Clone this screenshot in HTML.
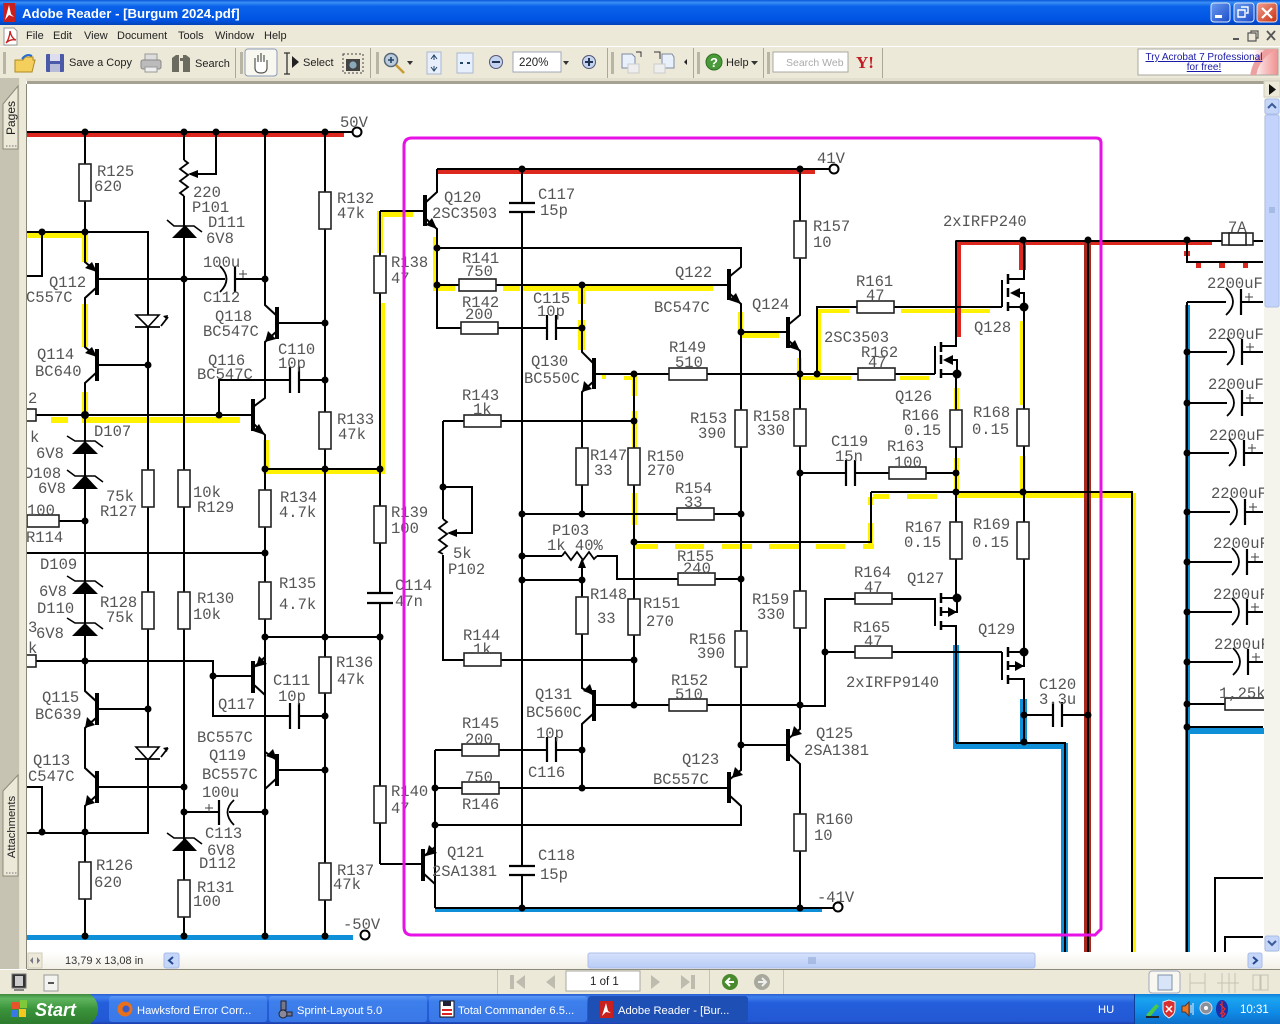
<!DOCTYPE html>
<html><head><meta charset="utf-8"><title>Adobe Reader - [Burgum 2024.pdf]</title>
<style>
html,body{margin:0;padding:0;background:#fff;width:1280px;height:1024px;overflow:hidden}
svg{display:block;position:absolute;left:0;top:0}
.t text{font-family:"Liberation Mono",monospace;font-size:15.5px;fill:#555}
.w{fill:none;stroke:#000;stroke-width:2}
.b{fill:none;stroke:#000;stroke-width:4}
.y{fill:#fff200;stroke:none}
.rd{fill:#dc281e;stroke:none}
.bl{fill:#0f8fd8;stroke:none}
.r rect{fill:#fff;stroke:#222;stroke-width:1.6}
.u text{font-family:"Liberation Sans",sans-serif;font-size:11px;fill:#222}
.tb text{font-family:"Liberation Sans",sans-serif;font-size:11.2px;fill:#fff}
</style></head><body>
<svg width="1280" height="1024" viewBox="0 0 1280 1024" xmlns="http://www.w3.org/2000/svg">
<defs>
<linearGradient id="tg" x1="0" y1="0" x2="0" y2="1"><stop offset="0" stop-color="#0a55d8"/><stop offset=".1" stop-color="#3a90f5"/><stop offset=".25" stop-color="#0a62ea"/><stop offset=".8" stop-color="#0054e3"/><stop offset="1" stop-color="#0342b8"/></linearGradient>
<linearGradient id="bg" x1="0" y1="0" x2="0" y2="1"><stop offset="0" stop-color="#2a5fd0"/><stop offset=".1" stop-color="#3f80ee"/><stop offset=".3" stop-color="#245edb"/><stop offset=".9" stop-color="#2358d4"/><stop offset="1" stop-color="#1b3fa8"/></linearGradient>
<linearGradient id="sg" x1="0" y1="0" x2="0" y2="1"><stop offset="0" stop-color="#3d8a3d"/><stop offset=".15" stop-color="#5fb55f"/><stop offset=".5" stop-color="#3b943b"/><stop offset="1" stop-color="#2d7a2d"/></linearGradient>
<linearGradient id="tr" x1="0" y1="0" x2="0" y2="1"><stop offset="0" stop-color="#0e7ed8"/><stop offset=".15" stop-color="#1ba4ef"/><stop offset=".6" stop-color="#0f8ce8"/><stop offset="1" stop-color="#0d6fc8"/></linearGradient>
<linearGradient id="tk" x1="0" y1="0" x2="0" y2="1"><stop offset="0" stop-color="#5a96f5"/><stop offset=".2" stop-color="#3d7fec"/><stop offset="1" stop-color="#3a78e6"/></linearGradient>
<linearGradient id="cl" x1="0" y1="0" x2="1" y2="1"><stop offset="0" stop-color="#f0a090"/><stop offset="1" stop-color="#c8300f"/></linearGradient>
<linearGradient id="wb" x1="0" y1="0" x2="1" y2="1"><stop offset="0" stop-color="#6a9cf0"/><stop offset="1" stop-color="#1c4cc8"/></linearGradient>
<linearGradient id="hs" x1="0" y1="0" x2="0" y2="1"><stop offset="0" stop-color="#fff"/><stop offset="1" stop-color="#f2f0e6"/></linearGradient>
<linearGradient id="ht" x1="0" y1="0" x2="0" y2="1"><stop offset="0" stop-color="#d6e2fc"/><stop offset="1" stop-color="#b8ccf6"/></linearGradient>
<linearGradient id="ad" x1="0" y1="0" x2="1" y2="0"><stop offset="0" stop-color="#fff"/><stop offset=".82" stop-color="#fff"/><stop offset=".9" stop-color="#f8c8c8"/><stop offset="1" stop-color="#f09090"/></linearGradient>
<clipPath id="adc"><rect x="1138" y="49" width="140" height="26"/></clipPath>
</defs>
<rect width="1280" height="1024" fill="#fff"/>

<!-- coloured highlight traces -->
<g class="y">
<rect x="27" y="232" width="58" height="6"/><rect x="82" y="232" width="6" height="30"/><rect x="82" y="304" width="6" height="43"/><rect x="82" y="392" width="6" height="23"/>
<rect x="51" y="417" width="17" height="6"/><rect x="82" y="417" width="158" height="6"/>
<rect x="263" y="440" width="6" height="34"/><rect x="265" y="469" width="119" height="5"/>
<rect x="377" y="211" width="6" height="42"/><rect x="377" y="212" width="36" height="5"/><rect x="380" y="303" width="5" height="171"/>
<rect x="433" y="237" width="5" height="53"/><rect x="433" y="286" width="22" height="5"/><rect x="503" y="286" width="17" height="5"/><rect x="523" y="286" width="190" height="5"/>
<rect x="578" y="290" width="7" height="14"/><rect x="578" y="320" width="7" height="30"/>
<rect x="738" y="312" width="5" height="20"/><rect x="741" y="333" width="38" height="5"/><rect x="797" y="358" width="5" height="19"/>
<rect x="602" y="375" width="4" height="4"/><rect x="624" y="376" width="8" height="4"/><rect x="632" y="376" width="5" height="20"/><rect x="632" y="411" width="5" height="39"/><rect x="632" y="493" width="5" height="32"/>
<rect x="634" y="544" width="24" height="5"/><rect x="675" y="544" width="29" height="5"/><rect x="722" y="544" width="30" height="5"/><rect x="769" y="544" width="30" height="5"/><rect x="816" y="544" width="29" height="5"/><rect x="863" y="544" width="11" height="5"/>
<rect x="868" y="523" width="5" height="22"/><rect x="868" y="497" width="5" height="8"/>
<rect x="873" y="494" width="16" height="5"/><rect x="907" y="494" width="30" height="5"/><rect x="956" y="493" width="177" height="5"/><rect x="1131" y="493" width="5" height="459"/>
<rect x="817" y="309" width="4" height="66"/><rect x="817" y="309" width="32" height="4"/><rect x="901" y="309" width="89" height="4"/>
<rect x="798" y="376" width="53" height="4"/><rect x="900" y="376" width="29" height="4"/>
<rect x="954" y="388" width="5" height="22"/><rect x="954" y="458" width="5" height="34"/><rect x="1020" y="321" width="4" height="84"/><rect x="1020" y="456" width="6" height="36"/>
</g>
<g class="rd">
<rect x="27" y="132" width="317" height="5"/><rect x="437" y="169" width="378" height="5"/>
<rect x="956" y="240" width="256" height="5"/><rect x="955" y="240" width="6" height="97"/><rect x="1019" y="240" width="7" height="30"/>
<rect x="1184" y="251" width="6" height="5"/><rect x="1196" y="263" width="5" height="5"/><rect x="1219" y="263" width="6" height="5"/><rect x="1243" y="263" width="5" height="5"/>
</g>
<rect x="1084" y="240" width="7" height="712" fill="#a8281e"/>
<g class="bl">
<rect x="27" y="935" width="326" height="5"/><rect x="435" y="907" width="387" height="5"/>
<rect x="953" y="645" width="6" height="103"/><rect x="953" y="743" width="115" height="6"/><rect x="1061" y="743" width="7" height="209"/><rect x="1020" y="699" width="7" height="44"/>
<rect x="1185" y="305" width="5" height="647"/><rect x="1187" y="728" width="77" height="6"/>
</g>

<!-- wires -->
<path class="w" d="M27 132H352M85 132V262L97 272M97 287L85 298V347L97 357M97 372L85 383V661V691L97 702M97 717L85 728V768L97 779M97 795L85 806V936
M27 232H148V315M148 327V448V470M148 507V592M148 629V747M148 760V833H27M42 232V276H27M42 832V787H27
M97 279H225M235 279H265M97 365H148M97 709H148M97 787H184
M184 132V160M184 196V936M216 132V174H190
M265 132V305L277 316M277 331L265 342V398L253 407M253 423L265 435V936
M325 132V936M277 323H325M219 415V380H290M299 380H325M36 415H253M265 469H380M265 553H27M59 521H85M36 661H213V716H290M299 716H325M213 676H253
M253 668L265 657V637H380M253 684L265 695V752L277 760M277 778L265 789M277 770H325M184 812H219M229 812H265
M380 211V469V593M380 603V864M380 211H425M380 864H423"/>
<path class="w" d="M437 169H829M437 169V192L425 203M425 218L437 229V328H461M522 169V203M522 212V866M522 875V908M437 248H741V267L729 277M437 285H729M729 293L741 304V770L729 780M729 795L741 806V825H435
M582 285V352L594 364M594 381L582 392V514M498 328H547M556 328H582M594 374H800M634 374V705M443 421H634M443 421V519M443 555V660H634M443 487H472V533H449
M522 514H741M522 556H562M597 556H617V579H741M522 580H582M582 566V688L594 695M594 713L582 724V788M594 705H800M435 750H547M556 750H582M435 788H729M435 750V908
M423 857L435 847M423 873L435 884M435 908H833
M741 332H788M788 325L800 315V169M788 340L800 351V729L788 739M788 753L800 764V908M741 745H788M800 473H846M855 473H956M800 706H825V599H935M825 652H1002
M817 374V307H1002M800 374H935"/>
<path class="w" d="M956 241H1263M956 241V346H941M941 374H957V360H953M1024 241V279H1008M1008 307H1024V293H1020M1024 307V652H1008M956 374V598H941M941 626H956V743M941 612H957V598M1008 679H1024V743M1008 666H1024V652
M871 492V542H634M871 492H1132V952M1024 715H1053M1062 715H1088M956 743H1065V952M1088 240V952
M1187 240V262H1263M1187 302V952M1187 302H1226M1241 302H1263M1187 352H1227M1242 352H1263M1187 403H1227M1242 403H1263M1187 453H1229M1244 453H1263M1187 512H1230M1245 512H1263M1187 562H1232M1247 562H1263M1187 612H1232M1247 612H1263M1187 662H1233M1248 662H1263M1187 704H1225M1187 727H1263
M1215 952V878H1263M1225 952V937H1263"/>
<!-- transistor bars -->
<path class="b" d="M97 263V295M97 349V381M97 693V725M97 771V803M253 399V431M253 661V693M277 307V339M277 754V786M425 195V226M423 849V881M594 358V389M594 690V721M729 269V300M729 772V803M788 317V348M788 729V761"/>
<!-- arrows -->
<path d="M97 272l-12-4 7-6zM97 357l-12-4 7-6zM265 435l-12-4 6-7zM437 229l-11-4 6-7zM741 304l-12-4 7-7zM800 351l-12-4 7-7zM85 728l2-11 8 8zM85 806l2-11 8 8zM265 342l3-11 8 8zM582 392l2-11 8 8zM256 667l3-11 8 8zM277 760l-11-4 7-7zM594 695l-11-4 7-7zM426 856l3-11 8 8zM732 778l3-11 8 8zM791 737l3-11 8 8z"/>
<path d="M188 174l10-4v8zM447 533l10-4v8zM582 558l-4 10h8zM943 360l10-5v10zM1010 293l10-5v10zM957 612l-9-5v10zM1024 666l-9-5v10z"/>
<!-- mosfets -->
<path class="w" d="M935 346V374M1002 280V307M935 598V626M1002 652V680"/>
<path fill="none" stroke="#000" stroke-width="2.5" d="M941 342V352M941 355V364M941 369V378M1008 274V284M1008 288V297M1008 302V311M941 593V603M941 607V616M941 621V630M1008 647V657M1008 661V670M1008 675V684"/>
<!-- pots -->
<path fill="none" stroke="#000" stroke-width="1.8" d="M184 160l4 3-8 6 8 6-8 6 8 6-8 6 4 3M443 519l4 3-8 6 8 6-8 6 8 6-8 6 4 2M562 556l3-4 6 8 6-8 6 8 6-8 5 7 3-3"/>
<!-- zeners -->
<path d="M172 238h25l-12-13zM72 454h26l-13-13zM72 489h26l-13-14zM72 594h26l-13-13zM72 636h26l-13-13zM172 851h25l-12-13z"/>
<path fill="none" stroke="#000" stroke-width="1.6" d="M167 220l7 6h20l8 6M67 436l8 5h20l8 6M67 470l8 6h20l8 6M67 576l8 5h20l8 6M67 618l8 5h20l8 6M167 833l7 5h20l8 6"/>
<!-- LEDs -->
<path fill="#fff" stroke="#000" stroke-width="1.6" d="M136 315h23l-11 12zM136 747h23l-11 13z"/>
<path fill="none" stroke="#000" stroke-width="1.8" d="M135 327h25M135 759h25M161 326l7-9M161 757l7-9"/>
<path d="M168 315l-5 1 4 4zM168 747l-5 1 4 4z"/>
<!-- caps -->
<path fill="none" stroke="#000" stroke-width="2.2" d="M290 367V393M299 367V393M290 703V729M299 703V729M235 266V292M219 800V825M509 203H535M509 212H535M509 866H535M509 875H535M367 593H393M367 603H393M547 315V340M556 315V340M547 737V762M556 737V762M846 460V486M855 460V486M1053 702V727M1062 702V727
M1241 289V315M1242 339V365M1242 390V416M1244 440V466M1245 499V525M1247 549V575M1247 599V625M1248 649V675"/>
<path fill="none" stroke="#000" stroke-width="1.8" d="M220 266Q233 279 220 292M234 800Q221 812 234 825M1226 288Q1240 302 1226 315M1227 338Q1241 352 1227 365M1227 389Q1241 403 1227 416M1229 439Q1243 453 1229 466M1230 498Q1244 512 1230 525M1232 548Q1246 562 1232 575M1232 598Q1246 612 1232 625M1233 648Q1247 662 1233 675"/>
<path fill="none" stroke="#444" stroke-width="1" d="M239 274h8M243 270v8M205 808h8M209 804v8M1245 297h8M1249 293v8M1246 347h8M1250 343v8M1246 398h8M1250 394v8M1248 448h8M1252 444v8M1249 507h8M1253 503v8M1251 557h8M1255 553v8M1251 607h8M1255 603v8M1252 657h8M1256 653v8"/>
<!-- resistors -->
<g class="r">
<rect x="79" y="164" width="12" height="37"/><rect x="319" y="192" width="12" height="37"/><rect x="319" y="412" width="12" height="37"/><rect x="374" y="256" width="12" height="37"/><rect x="142" y="470" width="12" height="37"/><rect x="178" y="470" width="12" height="37"/><rect x="259" y="490" width="12" height="37"/><rect x="374" y="506" width="12" height="37"/><rect x="259" y="582" width="12" height="37"/><rect x="142" y="592" width="12" height="37"/><rect x="178" y="592" width="12" height="37"/><rect x="319" y="657" width="12" height="36"/><rect x="374" y="786" width="12" height="37"/><rect x="79" y="862" width="12" height="37"/><rect x="319" y="863" width="12" height="37"/><rect x="178" y="880" width="12" height="37"/>
<rect x="27" y="515" width="32" height="12"/><rect x="24" y="409" width="12" height="12"/><rect x="24" y="655" width="12" height="12"/>
<rect x="459" y="279" width="37" height="12"/><rect x="461" y="322" width="37" height="12"/><rect x="669" y="368" width="38" height="12"/><rect x="464" y="415" width="37" height="12"/><rect x="677" y="508" width="37" height="12"/><rect x="678" y="573" width="37" height="12"/><rect x="464" y="653" width="37" height="13"/><rect x="669" y="699" width="38" height="12"/><rect x="462" y="744" width="37" height="12"/><rect x="462" y="782" width="37" height="12"/>
<rect x="794" y="221" width="12" height="37"/><rect x="576" y="448" width="12" height="37"/><rect x="628" y="448" width="12" height="37"/><rect x="735" y="410" width="12" height="37"/><rect x="794" y="409" width="12" height="37"/><rect x="576" y="597" width="12" height="37"/><rect x="628" y="599" width="12" height="36"/><rect x="794" y="591" width="12" height="37"/><rect x="735" y="631" width="12" height="36"/><rect x="794" y="814" width="12" height="37"/>
<rect x="857" y="301" width="37" height="12"/><rect x="858" y="368" width="37" height="12"/><rect x="889" y="467" width="37" height="12"/><rect x="855" y="593" width="37" height="11"/><rect x="855" y="646" width="37" height="12"/>
<rect x="950" y="410" width="12" height="37"/><rect x="1017" y="409" width="12" height="37"/><rect x="950" y="522" width="12" height="37"/><rect x="1017" y="522" width="12" height="37"/>
<rect x="1225" y="698" width="40" height="12"/><rect x="1222" y="233" width="31" height="12"/><rect x="1229" y="233" width="17" height="12"/>
</g>
<!-- dots -->
<g fill="#000">
<circle cx="85" cy="132" r="3.5"/><circle cx="184" cy="132" r="3.5"/><circle cx="216" cy="132" r="3.5"/><circle cx="265" cy="132" r="3.5"/><circle cx="325" cy="132" r="3.5"/><circle cx="42" cy="232" r="3.5"/><circle cx="85" cy="232" r="3.5"/><circle cx="184" cy="279" r="3.5"/><circle cx="265" cy="279" r="3.5"/><circle cx="325" cy="323" r="3.5"/><circle cx="148" cy="365" r="3.5"/><circle cx="325" cy="380" r="3.5"/><circle cx="85" cy="415" r="4"/><circle cx="219" cy="415" r="3.5"/><circle cx="265" cy="469" r="3.5"/><circle cx="325" cy="469" r="3.5"/><circle cx="380" cy="469" r="3.5"/><circle cx="85" cy="521" r="3.5"/><circle cx="265" cy="553" r="3.5"/><circle cx="265" cy="637" r="3.5"/><circle cx="325" cy="637" r="3.5"/><circle cx="380" cy="637" r="3.5"/><circle cx="85" cy="661" r="3.5"/><circle cx="213" cy="676" r="3.5"/><circle cx="148" cy="709" r="3.5"/><circle cx="325" cy="716" r="3.5"/><circle cx="325" cy="770" r="3.5"/><circle cx="184" cy="787" r="3.5"/><circle cx="184" cy="812" r="3.5"/><circle cx="265" cy="812" r="3.5"/><circle cx="42" cy="832" r="3.5"/><circle cx="85" cy="832" r="3.5"/><circle cx="85" cy="936" r="3.5"/><circle cx="184" cy="936" r="3.5"/><circle cx="265" cy="936" r="3.5"/><circle cx="325" cy="936" r="3.5"/>
<circle cx="522" cy="169" r="3.5"/><circle cx="800" cy="169" r="3.5"/><circle cx="437" cy="248" r="3.5"/><circle cx="437" cy="285" r="3.5"/><circle cx="582" cy="285" r="3.5"/><circle cx="582" cy="328" r="3.5"/><circle cx="741" cy="332" r="3.5"/><circle cx="634" cy="374" r="3.5"/><circle cx="800" cy="374" r="3.5"/><circle cx="817" cy="374" r="3.5"/><circle cx="634" cy="421" r="3.5"/><circle cx="800" cy="473" r="3.5"/><circle cx="443" cy="487" r="3.5"/><circle cx="522" cy="514" r="3.5"/><circle cx="582" cy="514" r="3.5"/><circle cx="741" cy="514" r="3.5"/><circle cx="634" cy="542" r="3.5"/><circle cx="522" cy="556" r="3.5"/><circle cx="522" cy="580" r="3.5"/><circle cx="582" cy="580" r="3.5"/><circle cx="741" cy="579" r="3.5"/><circle cx="634" cy="660" r="3.5"/><circle cx="634" cy="705" r="3.5"/><circle cx="800" cy="705" r="3.5"/><circle cx="825" cy="652" r="3.5"/><circle cx="741" cy="745" r="3.5"/><circle cx="582" cy="750" r="3.5"/><circle cx="435" cy="788" r="3.5"/><circle cx="582" cy="788" r="3.5"/><circle cx="435" cy="825" r="3.5"/><circle cx="522" cy="908" r="3.5"/><circle cx="800" cy="908" r="3.5"/>
<circle cx="1023" cy="240" r="3.5"/><circle cx="1088" cy="240" r="3.5"/><circle cx="1187" cy="240" r="3.5"/><circle cx="1024" cy="307" r="4.5"/><circle cx="957" cy="374" r="4.5"/><circle cx="956" cy="473" r="3.5"/><circle cx="956" cy="492" r="3.5"/><circle cx="1023" cy="492" r="3.5"/><circle cx="957" cy="598" r="4.5"/><circle cx="1024" cy="652" r="4.5"/><circle cx="1024" cy="715" r="3.5"/><circle cx="1088" cy="715" r="3.5"/><circle cx="1024" cy="742" r="3.5"/>
<circle cx="1187" cy="352" r="3.5"/><circle cx="1187" cy="403" r="3.5"/><circle cx="1187" cy="453" r="3.5"/><circle cx="1187" cy="512" r="3.5"/><circle cx="1187" cy="562" r="3.5"/><circle cx="1187" cy="612" r="3.5"/><circle cx="1187" cy="662" r="3.5"/><circle cx="1187" cy="704" r="3.5"/><circle cx="1187" cy="727" r="3.5"/>
</g>
<g fill="#fff" stroke="#000" stroke-width="2"><circle cx="357" cy="132" r="4.5"/><circle cx="365" cy="935" r="4.5"/><circle cx="834" cy="169" r="4.5"/><circle cx="838" cy="907" r="4.5"/></g>

<!-- labels -->
<g class="t">
<text x="340" y="127">50V</text><text x="97" y="176">R125</text><text x="94" y="191">620</text><text x="193" y="197">220</text><text x="192" y="212">P101</text><text x="208" y="227">D111</text><text x="206" y="243">6V8</text><text x="203" y="267">100u</text><text x="203" y="302">C112</text><text x="26" y="302">C557C</text><text x="49" y="287">Q112</text><text x="215" y="321">Q118</text><text x="203" y="336">BC547C</text><text x="337" y="203">R132</text><text x="337" y="218">47k</text><text x="37" y="359">Q114</text><text x="35" y="376">BC640</text><text x="278" y="354">C110</text><text x="278" y="368">10p</text><text x="208" y="365">Q116</text><text x="197" y="379">BC547C</text><text x="337" y="424">R133</text><text x="338" y="439">47k</text><text x="28" y="403">2</text><text x="30" y="442">k</text><text x="94" y="436">D107</text><text x="36" y="458">6V8</text><text x="24" y="478">D108</text><text x="38" y="493">6V8</text><text x="106" y="501">75k</text><text x="100" y="516">R127</text><text x="193" y="497">10k</text><text x="197" y="512">R129</text><text x="280" y="502">R134</text><text x="279" y="517">4.7k</text><text x="27" y="515">100</text><text x="26" y="542">R114</text>
<text x="40" y="569">D109</text><text x="39" y="596">6V8</text><text x="37" y="613">D110</text><text x="28" y="632">3</text><text x="36" y="638">6V8</text><text x="100" y="607">R128</text><text x="106" y="622">75k</text><text x="197" y="603">R130</text><text x="193" y="619">10k</text><text x="279" y="588">R135</text><text x="279" y="609">4.7k</text><text x="28" y="653">k</text><text x="336" y="667">R136</text><text x="337" y="684">47k</text><text x="273" y="685">C111</text><text x="278" y="701">10p</text><text x="218" y="709">Q117</text><text x="42" y="702">Q115</text><text x="35" y="719">BC639</text><text x="197" y="742">BC557C</text><text x="209" y="760">Q119</text><text x="202" y="779">BC557C</text><text x="202" y="797">100u</text><text x="205" y="838">C113</text><text x="207" y="855">6V8</text><text x="199" y="868">D112</text><text x="197" y="892">R131</text><text x="193" y="906">100</text><text x="33" y="765">Q113</text><text x="28" y="781">C547C</text><text x="96" y="870">R126</text><text x="94" y="887">620</text><text x="337" y="875">R137</text><text x="333" y="889">47k</text><text x="343" y="929">-50V</text>
<text x="391" y="267">R138</text><text x="391" y="283">47</text><text x="391" y="517">R139</text><text x="391" y="533">100</text><text x="395" y="590">C114</text><text x="395" y="606">47n</text><text x="391" y="796">R140</text><text x="391" y="813">47</text>
<text x="817" y="163">41V</text><text x="444" y="202">Q120</text><text x="432" y="218">2SC3503</text><text x="538" y="199">C117</text><text x="540" y="215">15p</text><text x="813" y="231">R157</text><text x="813" y="247">10</text><text x="462" y="263">R141</text><text x="465" y="276">750</text><text x="675" y="277">Q122</text><text x="654" y="312">BC547C</text><text x="752" y="309">Q124</text><text x="462" y="307">R142</text><text x="465" y="319">200</text><text x="533" y="303">C115</text><text x="537" y="316">10p</text><text x="531" y="366">Q130</text><text x="524" y="383">BC550C</text><text x="669" y="352">R149</text><text x="675" y="367">510</text><text x="462" y="400">R143</text><text x="473" y="414">1k</text><text x="690" y="423">R153</text><text x="698" y="438">390</text><text x="753" y="421">R158</text><text x="757" y="435">330</text><text x="590" y="460">R147</text><text x="594" y="475">33</text><text x="647" y="461">R150</text><text x="647" y="475">270</text><text x="675" y="493">R154</text><text x="684" y="507">33</text><text x="552" y="535">P103</text><text x="547" y="550">1k 40%</text><text x="453" y="558">5k</text><text x="448" y="574">P102</text><text x="677" y="561">R155</text><text x="683" y="573">240</text><text x="590" y="599">R148</text><text x="597" y="623">33</text><text x="643" y="608">R151</text><text x="646" y="626">270</text><text x="752" y="604">R159</text><text x="757" y="619">330</text><text x="689" y="644">R156</text><text x="697" y="658">390</text><text x="463" y="640">R144</text><text x="473" y="654">1k</text><text x="535" y="699">Q131</text><text x="526" y="717">BC560C</text><text x="671" y="685">R152</text><text x="675" y="699">510</text><text x="462" y="728">R145</text><text x="465" y="744">200</text><text x="536" y="738">10p</text><text x="528" y="777">C116</text><text x="465" y="782">750</text><text x="462" y="809">R146</text><text x="682" y="764">Q123</text><text x="653" y="784">BC557C</text><text x="816" y="738">Q125</text><text x="804" y="755">2SA1381</text><text x="816" y="824">R160</text><text x="814" y="840">10</text><text x="447" y="857">Q121</text><text x="432" y="876">2SA1381</text><text x="538" y="860">C118</text><text x="540" y="879">15p</text><text x="817" y="902">-41V</text>
<text x="943" y="226">2xIRFP240</text><text x="856" y="286">R161</text><text x="866" y="300">47</text><text x="974" y="332">Q128</text><text x="824" y="342">2SC3503</text><text x="861" y="357">R162</text><text x="868" y="367">47</text><text x="895" y="401">Q126</text><text x="902" y="420">R166</text><text x="904" y="435">0.15</text><text x="973" y="417">R168</text><text x="972" y="434">0.15</text><text x="831" y="446">C119</text><text x="835" y="461">15n</text><text x="887" y="451">R163</text><text x="894" y="467">100</text><text x="905" y="532">R167</text><text x="904" y="547">0.15</text><text x="973" y="529">R169</text><text x="972" y="547">0.15</text><text x="854" y="577">R164</text><text x="907" y="583">Q127</text><text x="864" y="592">47</text><text x="853" y="632">R165</text><text x="864" y="646">47</text><text x="846" y="687">2xIRFP9140</text><text x="978" y="634">Q129</text><text x="1039" y="689">C120</text><text x="1039" y="704">3.3u</text><text x="1228" y="232">7A</text>
<text x="1207" y="288">2200uF</text><text x="1208" y="339">2200uF</text><text x="1208" y="389">2200uF</text><text x="1209" y="440">2200uF</text><text x="1211" y="498">2200uF</text><text x="1213" y="548">2200uF</text><text x="1213" y="599">2200uF</text><text x="1214" y="649">2200uF</text><text x="1219" y="698">1,25k</text>
</g>
<!-- magenta frame -->
<path fill="none" stroke="#e612e6" stroke-width="3" d="M412 138H1096Q1101 138 1101 143V929L1095 935H412Q404 935 404 927V146Q404 138 412 138Z"/>

<!-- window chrome -->
<rect x="0" y="0" width="1280" height="25" fill="url(#tg)"/>
<path d="M3 3h12v19H3z" fill="#c81f1f"/><path d="M5 20l4-15 2 9 3 3-5-2z" fill="#fff"/>
<text x="22" y="18" font-family="Liberation Sans,sans-serif" font-size="13.2" font-weight="bold" fill="#fff">Adobe Reader - [Burgum 2024.pdf]</text>
<rect x="1211" y="3" width="19" height="19" rx="3" fill="url(#wb)" stroke="#dfe8fb"/><rect x="1215" y="15" width="7" height="3" fill="#fff"/>
<rect x="1234" y="3" width="20" height="19" rx="3" fill="url(#wb)" stroke="#dfe8fb"/><path d="M1241 7h7v6h-2M1238 10h7v7h-7z" fill="none" stroke="#fff" stroke-width="1.4"/>
<rect x="1257" y="3" width="20" height="19" rx="3" fill="url(#cl)" stroke="#f4dcd6"/><path d="M1262 8l10 10M1272 8l-10 10" stroke="#fff" stroke-width="2.2"/>
<rect x="0" y="25" width="1280" height="22" fill="#ece9d8"/>
<path d="M4 28h10l3 3v14H4z" fill="#fff" stroke="#999"/><path d="M6 43c2-2 4-8 4-12 1 5 3 8 6 9-4-1-7 0-10 3z" fill="none" stroke="#c81f1f" stroke-width="1.3"/>
<g class="u"><text x="26" y="39">File</text><text x="53" y="39">Edit</text><text x="84" y="39">View</text><text x="117" y="39">Document</text><text x="178" y="39">Tools</text><text x="215" y="39">Window</text><text x="264" y="39">Help</text></g>
<g fill="#555"><rect x="1233" y="38" width="6" height="2"/></g>
<path d="M1248 33h8v8h-8zM1251 33v-2h7v7h-2" fill="none" stroke="#555" stroke-width="1.2"/>
<path d="M1267 31l8 9M1275 31l-8 9" stroke="#555" stroke-width="1.8"/>
<rect x="0" y="46" width="1280" height="32" fill="#ece9d8"/><rect x="0" y="46" width="1280" height="1" fill="#fff"/>
<g fill="#b8b5a4"><rect x="3" y="52" width="3" height="22"/><rect x="240" y="52" width="3" height="22"/><rect x="376" y="52" width="3" height="22"/><rect x="611" y="52" width="3" height="22"/><rect x="697" y="52" width="3" height="22"/><rect x="767" y="52" width="3" height="22"/></g>
<g fill="#aca899"><rect x="235" y="48" width="1" height="30"/><rect x="370" y="48" width="1" height="30"/><rect x="607" y="48" width="1" height="30"/><rect x="693" y="48" width="1" height="30"/><rect x="763" y="48" width="1" height="30"/><rect x="882" y="48" width="1" height="30"/></g>
<path d="M15 60h8l2-3h8v3h2l-3 12H15z" fill="#f5cf5c" stroke="#b08a20"/><path d="M22 59c3-4 6-5 10-3" fill="none" stroke="#2a6fd0" stroke-width="2"/>
<rect x="46" y="54" width="18" height="18" rx="1" fill="#4a5aa8"/><rect x="50" y="54" width="10" height="7" fill="#dde"/><rect x="50" y="64" width="10" height="8" fill="#b8bcd8"/>
<g class="u"><text x="69" y="66">Save a Copy</text><text x="195" y="67">Search</text><text x="303" y="66">Select</text><text x="726" y="66">Help</text></g>
<rect x="145" y="54" width="12" height="6" fill="#ddd" stroke="#999"/><rect x="141" y="60" width="20" height="9" rx="2" fill="#bbb" stroke="#888"/><rect x="145" y="67" width="12" height="5" fill="#eee" stroke="#999"/>
<path d="M172 58l4-3h3v17h-7zM180 58h3v-3h3l4 3v14h-7v-11h-3z" fill="#6b6b60"/>
<rect x="245" y="49" width="32" height="27" rx="3" fill="#f8f7f0" stroke="#8a9ab8"/>
<path d="M255 60v8c0 3 2 5 6 5s6-2 6-5v-8m-3 2v-7m-3 7v-9m-3 9v-7m-3 7v-4" fill="#fff" stroke="#555" stroke-width="1.2"/>
<path d="M284 53h6M284 74h6M287 53v21" stroke="#333" stroke-width="1.3"/><path d="M292 56l7 6-7 6z" fill="#222"/>
<rect x="343" y="54" width="20" height="19" fill="none" stroke="#444" stroke-dasharray="2 2"/><rect x="346" y="59" width="14" height="12" fill="#444"/><circle cx="353" cy="65" r="3.6" fill="#8ab"/>
<circle cx="391" cy="60" r="6.5" fill="#bcd" stroke="#567" stroke-width="1.5"/><path d="M388 60h6M391 57v6" stroke="#246" stroke-width="1.6"/><path d="M396 65l8 8" stroke="#c89a30" stroke-width="2.5"/>
<path d="M407 61h6l-3 4z" fill="#333"/>
<rect x="427" y="52" width="14" height="22" fill="#e6effb" stroke="#aab8d0"/><path d="M434 55v5M431 59l3-4 3 4M434 66v5M431 67l3 4 3-4" stroke="#246" fill="none"/>
<rect x="457" y="53" width="16" height="20" fill="#e6effb" stroke="#aab8d0"/><path d="M460 63h3M470 63h-3" stroke="#246" stroke-width="2"/>
<circle cx="496" cy="62" r="6.5" fill="#c4d4ee" stroke="#557"/><rect x="492" y="61" width="8" height="2" fill="#235"/>
<rect x="513" y="52" width="48" height="20" fill="#fff" stroke="#a0a8b8"/><text x="519" y="66" font-family="Liberation Sans,sans-serif" font-size="11.5" fill="#222">220%</text>
<path d="M563 61h6l-3 4z" fill="#333"/>
<circle cx="589" cy="62" r="6.5" fill="#c4d4ee" stroke="#557"/><path d="M585 62h8M589 58v8" stroke="#235" stroke-width="2"/>
<path d="M622 54h10l3 3v11h-13z" fill="#e8f0fc" stroke="#7f8aa0"/><path d="M628 64h11v9h-11z" fill="#eee" stroke="#ccc"/><path d="M636 52h5v5" fill="none" stroke="#333"/>
<path d="M662 54h10l2 3v11h-12z" fill="#e8f0fc" stroke="#7f8aa0"/><path d="M654 64h11v9h-11z" fill="#eee" stroke="#ccc"/><path d="M654 52h6v7" fill="none" stroke="#333"/>
<path d="M687 59v6l-3-3z" fill="#222"/>
<circle cx="714" cy="62" r="8" fill="#4a9a3a" stroke="#2d7020"/><text x="710" y="67" font-family="Liberation Sans,sans-serif" font-size="13" font-weight="bold" fill="#fff">?</text>
<path d="M751 61h7l-3.500 4z" fill="#333"/>
<rect x="773" y="52" width="75" height="20" fill="#fff" stroke="#a8a8a0"/><text x="786" y="66" font-family="Liberation Sans,sans-serif" font-size="10.5" fill="#aaa">Search Web</text>
<text x="856" y="68" font-family="Liberation Serif,serif" font-size="17" font-weight="bold" fill="#c21b22">Y!</text>
<rect x="1138" y="49" width="140" height="26" fill="url(#ad)" stroke="#a8a8a0"/><circle cx="1288" cy="80" r="35" fill="none" stroke="#eea0a0" stroke-width="6" clip-path="url(#adc)"/>
<g font-family="Liberation Sans,sans-serif" font-size="10" fill="#1a1aa8" text-decoration="underline" text-anchor="middle"><text x="1204" y="60">Try Acrobat 7 Professional</text><text x="1204" y="70">for free!</text></g>
<rect x="0" y="78" width="1280" height="3" fill="#e2dfce"/><rect x="27" y="81" width="1237" height="3" fill="#a5a292"/>
<!-- left panel -->
<rect x="0" y="78" width="20" height="891" fill="#c6c3b2"/><rect x="20" y="78" width="6" height="891" fill="#ece9d8"/><rect x="26" y="84" width="1" height="885" fill="#8a8878"/>
<rect x="19" y="78" width="1" height="891" fill="#e6e3d2"/>
<path d="M3 104L18 86V149H3Z" fill="#ece9d8" stroke="#8c8a7a"/>
<path d="M3 791L18 775V876H3Z" fill="#ece9d8" stroke="#8c8a7a"/>
<path d="M6 146h11M6 873h11" stroke="#999" stroke-width="1.5" stroke-dasharray="1.5 1.5"/>
<g font-family="Liberation Sans,sans-serif" fill="#222" text-anchor="middle"><text font-size="12" transform="translate(15,118) rotate(-90)">Pages</text><text font-size="11.2" transform="translate(15,827) rotate(-90)">Attachments</text></g>
<!-- right scrollbar -->
<rect x="1264" y="84" width="16" height="868" fill="#f5f4ec"/>
<rect x="1264" y="81" width="16" height="16" fill="#ece9d8" stroke="#d0cdbc"/><path d="M1269 84l7 5.500-7 5.500z" fill="#111"/>
<rect x="1265" y="99" width="14" height="15" rx="2" fill="#c5d6f8" stroke="#a8bce8"/><path d="M1268 108l4-4 4 4" fill="none" stroke="#3a5a98" stroke-width="2"/>
<rect x="1265" y="115" width="14" height="192" rx="2" fill="#c3d3fb" stroke="#aebfe8"/><path d="M1269 208h6M1269 210h6M1269 212h6" stroke="#8aa0d0"/>
<rect x="1265" y="936" width="14" height="15" rx="2" fill="#c5d6f8" stroke="#a8bce8"/><path d="M1268 941l4 4 4-4" fill="none" stroke="#3a5a98" stroke-width="2"/>
<!-- horizontal scrollbar -->
<rect x="27" y="952" width="1253" height="17" fill="url(#hs)"/>
<rect x="28" y="953" width="14" height="15" fill="#ece9d8" stroke="#d0cdbc"/><path d="M33 957v7l-3-3.500zM37 957v7l3-3.500z" fill="#778"/>
<text x="65" y="964" font-family="Liberation Sans,sans-serif" font-size="11" fill="#333">13,79 x 13,08 in</text>
<rect x="164" y="953" width="15" height="15" rx="2" fill="#c5d6f8" stroke="#a8bce8"/><path d="M173 957l-4 3.500 4 3.500" fill="none" stroke="#234a90" stroke-width="2"/>
<rect x="588" y="953" width="447" height="15" rx="2" fill="url(#ht)" stroke="#aebfe8"/><path d="M809 957v7M811 957v7M813 957v7M815 957v7" stroke="#8aa0d0"/>
<rect x="1248" y="953" width="14" height="15" rx="2" fill="#c5d6f8" stroke="#a8bce8"/><path d="M1253 957l4 3.500-4 3.500" fill="none" stroke="#234a90" stroke-width="2"/>
<rect x="27" y="969" width="1253" height="1" fill="#8c8a7a"/>
<!-- status bar -->
<rect x="0" y="970" width="1280" height="24" fill="#ece9d8"/>
<rect x="12" y="974" width="14" height="14" fill="#333" stroke="#777"/><rect x="15" y="976" width="8" height="10" fill="#ccc"/><rect x="14" y="989" width="10" height="2" fill="#888"/>
<rect x="44" y="975" width="14" height="16" fill="#f3f3ef" stroke="#999"/><rect x="48" y="982" width="6" height="2" fill="#555"/>
<rect x="497" y="970" width="1" height="24" fill="#c6c3b2"/>
<path d="M510 975h4v14h-4zM525 975v14l-9-7z" fill="#bdbcae"/><path d="M555 975v14l-9-7z" fill="#bdbcae"/>
<rect x="566" y="971" width="74" height="20" fill="#fff" stroke="#a8a8a0"/><text x="590" y="985" font-family="Liberation Sans,sans-serif" font-size="11.5" fill="#222">1 of 1</text>
<path d="M651 975v14l9-7zM681 975v14l9-7zM691 975h4v14h-4z" fill="#bdbcae"/>
<rect x="709" y="970" width="1" height="24" fill="#c6c3b2"/>
<circle cx="730" cy="982" r="8" fill="#4a8a2e"/><path d="M734 982h-7M730 978l-4 4 4 4" fill="none" stroke="#fff" stroke-width="2"/>
<circle cx="762" cy="982" r="8" fill="#a8a89c"/><path d="M758 982h7M762 978l4 4-4 4" fill="none" stroke="#eee" stroke-width="2"/>
<rect x="783" y="970" width="1" height="24" fill="#c6c3b2"/>
<rect x="1149" y="971" width="31" height="22" rx="3" fill="#f8f7f0" stroke="#a0a8c0"/><rect x="1158" y="975" width="14" height="15" fill="#d8e4f8" stroke="#8090a8"/>
<path d="M1190 973v20M1205 973v20M1190 983h15M1222 973v20M1235 973v20M1217 983h22M1229 973v20M1253 975h7v15h-7zM1261 975h7v15h-7z" fill="none" stroke="#c4c2b4"/>
<!-- taskbar -->
<rect x="0" y="994" width="1280" height="30" fill="url(#bg)"/>
<path d="M0 994H90Q98 1000 98 1009Q98 1018 90 1024H0Z" fill="url(#sg)"/>
<g><rect x="12" y="1002" width="7" height="7" fill="#e8542a"/><rect x="20" y="1000" width="7" height="8" fill="#7ec83c"/><rect x="11" y="1010" width="7" height="7" fill="#3a78e8"/><rect x="19" y="1009" width="7" height="8" fill="#f4c81c"/></g>
<text x="35" y="1016" font-family="Liberation Sans,sans-serif" font-size="18" font-weight="bold" font-style="italic" fill="#fff">Start</text>
<rect x="109" y="996" width="158" height="26" rx="3" fill="url(#tk)"/><rect x="269" y="996" width="158" height="26" rx="3" fill="url(#tk)"/><rect x="429" y="996" width="158" height="26" rx="3" fill="url(#tk)"/><rect x="588" y="996" width="160" height="26" rx="3" fill="#1e4fb4"/>
<circle cx="125" cy="1009" r="7.5" fill="#e8701c"/><circle cx="126" cy="1009" r="3.5" fill="#3a5cc8"/>
<path d="M281 1001h5v9h-5zM286 1012h6v4h-6z" fill="#778" stroke="#223"/><circle cx="283" cy="1014" r="4" fill="#889" stroke="#223"/>
<rect x="440" y="1001" width="14" height="16" fill="#fff" stroke="#111"/><rect x="443" y="1001" width="8" height="5" fill="#223"/><rect x="442" y="1009" width="10" height="2" fill="#d22"/><rect x="442" y="1013" width="10" height="2" fill="#d22"/>
<rect x="600" y="1001" width="13" height="17" fill="#c81f1f"/><path d="M602 1016l4-13 2 8 3 2-5-1z" fill="#fff"/>
<g class="tb"><text x="137" y="1014">Hawksford Error Corr...</text><text x="297" y="1014">Sprint-Layout 5.0</text><text x="458" y="1014">Total Commander 6.5...</text><text x="618" y="1014">Adobe Reader - [Bur...</text><text x="1098" y="1013">HU</text></g>
<rect x="1134" y="994" width="146" height="30" fill="url(#tr)"/><rect x="1134" y="994" width="1" height="30" fill="#0b3f9a"/>
<path d="M1146 1015l10-11 3 2-9 11z" fill="#4ac84a"/><path d="M1146 1017h13" stroke="#222" stroke-width="2"/>
<path d="M1163 1002l6-2 6 2v7c0 5-3 7-6 9-3-2-6-4-6-9z" fill="#d83030" stroke="#eee"/><path d="M1166 1006l6 6M1172 1006l-6 6" stroke="#fff" stroke-width="1.5"/>
<path d="M1182 1006h3l4-4v14l-4-4h-3z" fill="#e87820" stroke="#533"/><path d="M1191 1005v8M1193 1003v12" stroke="#eee"/>
<circle cx="1206" cy="1008" r="6" fill="#8a8f9c" stroke="#ddd"/><circle cx="1206" cy="1008" r="2" fill="#fff"/>
<ellipse cx="1222" cy="1009" rx="6" ry="9" fill="#1a2fa8"/><path d="M1220 1004l5 5-5 5M1222 1001v16l3-3-3-3" fill="none" stroke="#e83030" stroke-width="1.2"/>
<text x="1240" y="1013" font-family="Liberation Sans,sans-serif" font-size="11.5" fill="#fff">10:31</text>
</svg>
</body></html>
